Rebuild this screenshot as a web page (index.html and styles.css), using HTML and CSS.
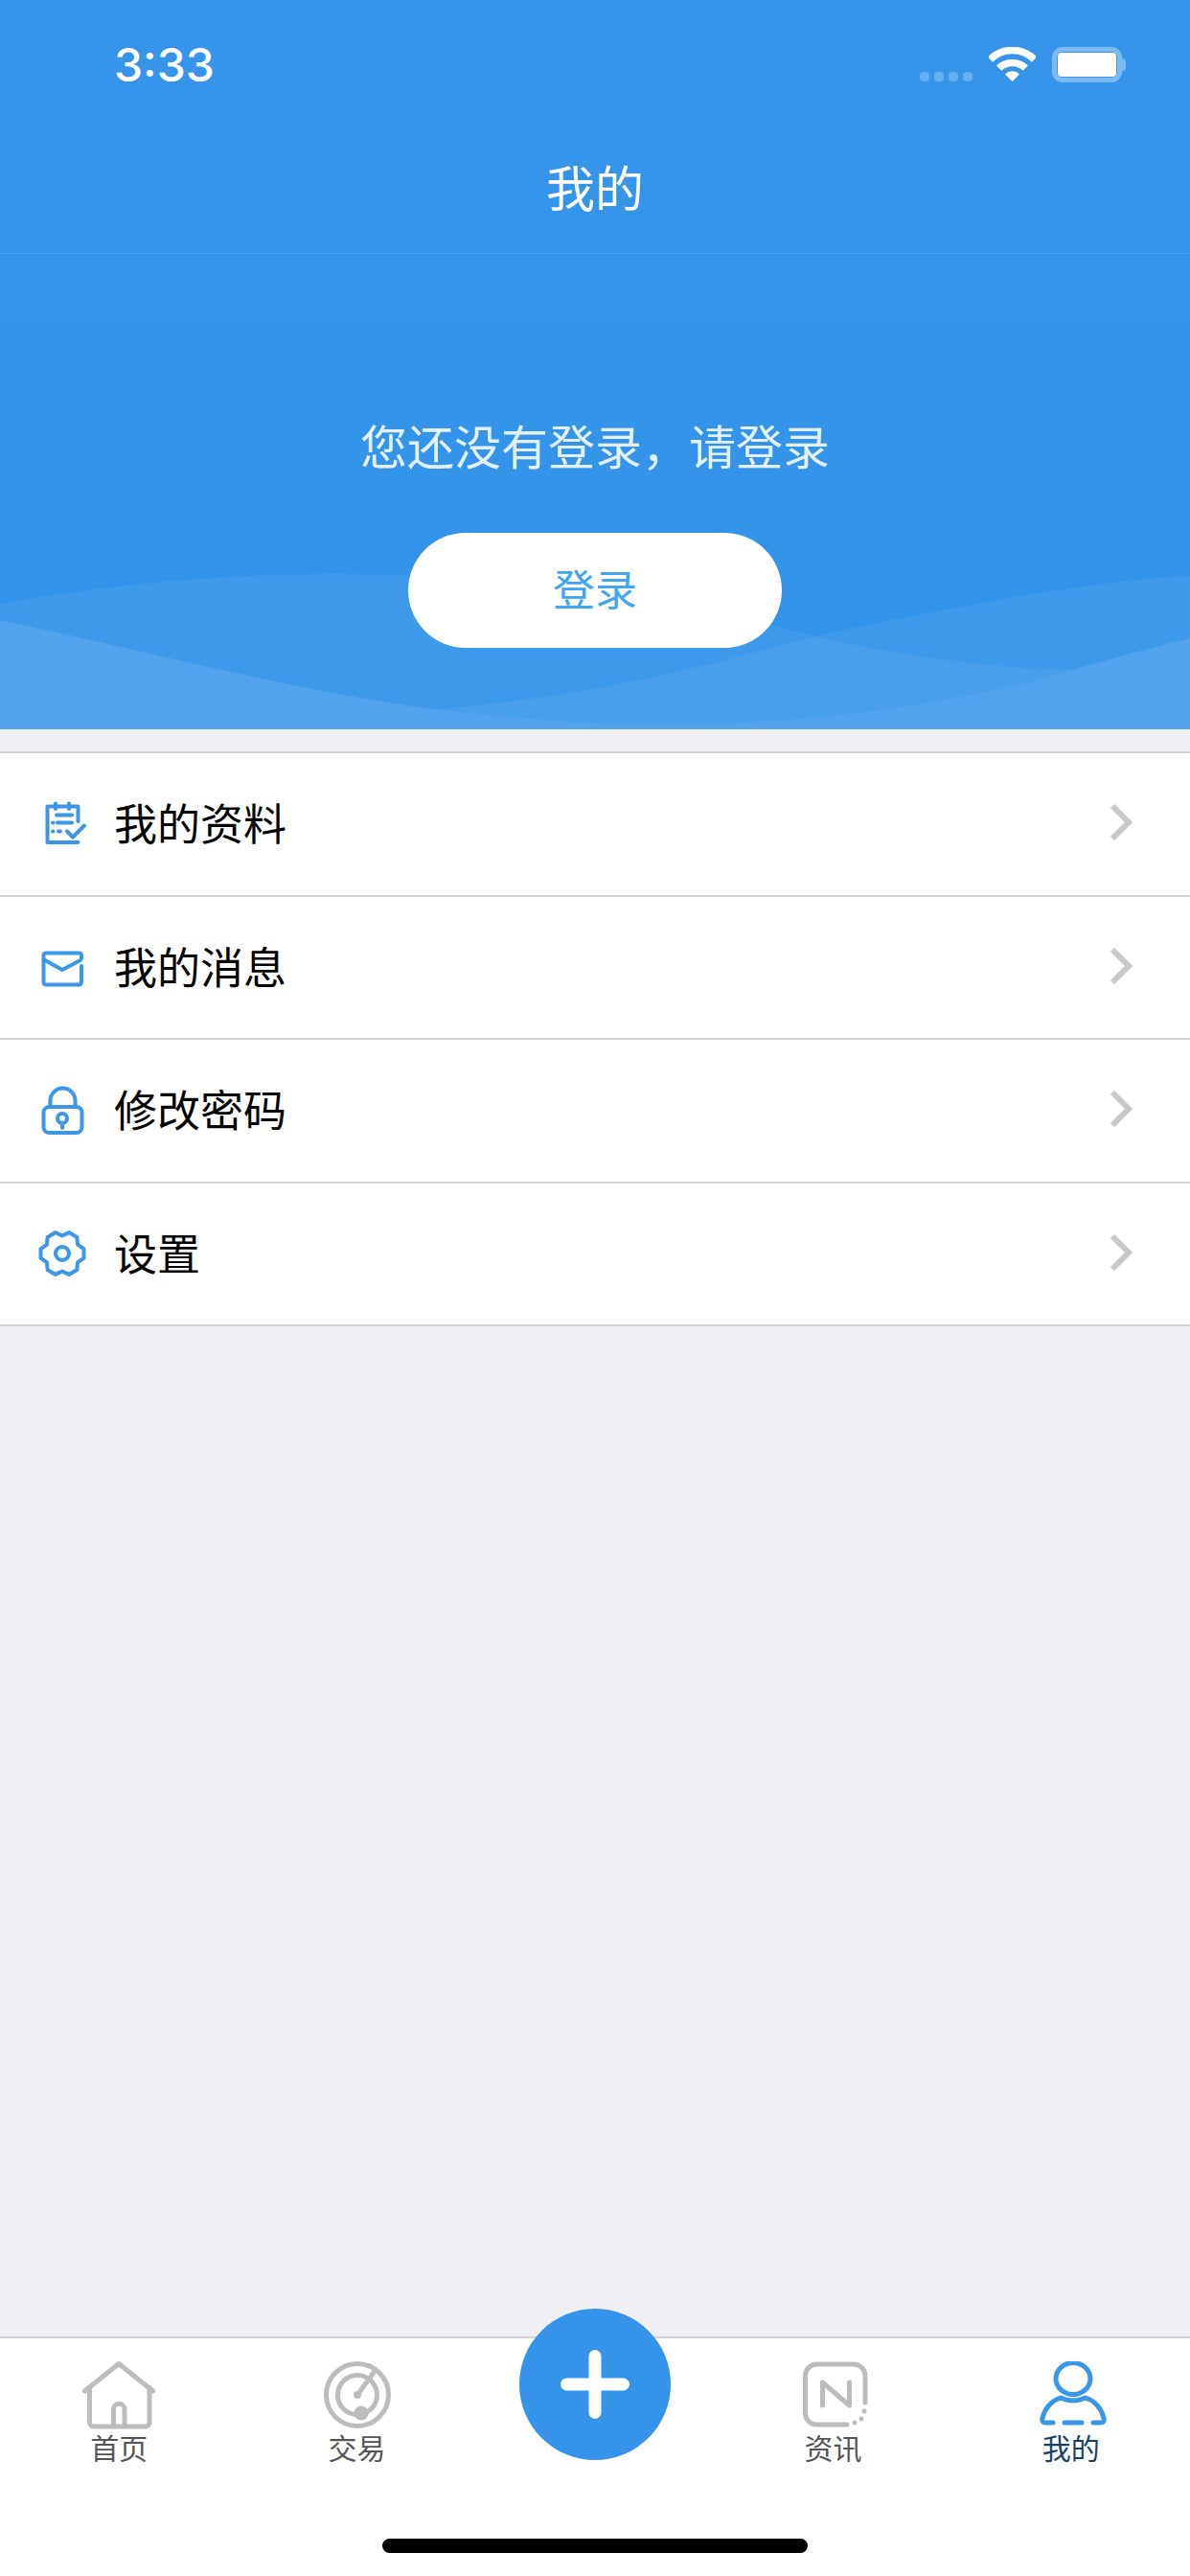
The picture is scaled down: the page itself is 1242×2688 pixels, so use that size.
FILE: index.html
```html
<!DOCTYPE html>
<html lang="zh-CN">
<head>
    <meta charset="UTF-8">
    <meta name="viewport" content="width=device-width, initial-scale=1.0">
    <title>我的</title>
    <link rel="stylesheet" href="styles.css">
</head>
<body>
    <header class="hero">
        <!-- waves behind the login button -->
        <svg class="hero-waves" viewBox="0 591 1242 170" preserveAspectRatio="none">
            <path class="wave-a" d="M0 630C100 612 220 599 350 599C560 600 700 622 850 664C950 686 1040 698 1120 699L1242 761H0Z"/>
            <path class="wave-b" d="M1242 601C1140 606 1010 630 850 664C760 688 640 724 455 740V761H1242Z"/>
            <path class="wave-c" d="M0 647C140 676 300 720 455 740C550 751 630 757 700 756C850 755 1000 735 1120 699C1160 687 1200 676 1242 666V761H0Z"/>
        </svg>

        <div class="status-bar">
            <span class="status-time">3:33</span>
            <div class="status-icons">
                <div class="signal"><i></i><i></i><i></i><i></i></div>
                <svg class="wifi" viewBox="0 0 49 36">
                    <path class="wifi-arc" d="M1.5 13A32.5 32.5 0 0 1 47.5 13"/>
                    <path class="wifi-arc" d="M10.7 22.2A19.5 19.5 0 0 1 38.3 22.2"/>
                    <path class="wifi-dot" d="M24.5 36L17 28.5A10.5 10.5 0 0 1 32 28.5Z"/>
                </svg>
                <div class="battery"><div class="battery-level"></div></div>
            </div>
        </div>

        <div class="nav-bar"><span class="nav-title">我的</span></div>

        <div class="login-box">
            <p class="login-tip">您还没有登录，请登录</p>
            <a class="login-btn">登录</a>
        </div>
    </header>

    <main class="content">
        <ul class="menu">
            <li class="menu-item">
                <svg class="menu-icon" viewBox="0 0 60 60">
                    <path d="M46.5 27V11.5H14.5V49H46.5"/>
                    <path d="M23 8.5V14M37 8.5V14M24 20.5H40M20 28.5H20.5M25 28.5H40M20 37.5H20.5M26 37.5H28"/>
                    <path d="M35 37.5L41 43.5L53 31.5"/>
                </svg>
                <span class="menu-text">我的资料</span>
                <svg class="menu-arrow" viewBox="0 0 24 38"><path d="M3 2L20 19L3 36"/></svg>
            </li>
            <li class="menu-item">
                <svg class="menu-icon" viewBox="0 0 60 60">
                    <path d="M50 29V46a2.5 2.5 0 0 1-2.5 2.5H13A2.5 2.5 0 0 1 10.5 46V18A2.5 2.5 0 0 1 13 15.5H47.5A2.5 2.5 0 0 1 50 18V21"/>
                    <path d="M12 23L30 33L49 23"/>
                </svg>
                <span class="menu-text">我的消息</span>
                <svg class="menu-arrow" viewBox="0 0 24 38"><path d="M3 2L20 19L3 36"/></svg>
            </li>
            <li class="menu-item">
                <svg class="menu-icon" viewBox="0 0 60 60">
                    <path d="M17.5 26V19.5a13 13 0 0 1 26 0V26"/>
                    <rect x="10.5" y="26" width="40" height="27" rx="6"/>
                    <circle cx="30" cy="38" r="5"/>
                    <path d="M30 43V48"/>
                </svg>
                <span class="menu-text">修改密码</span>
                <svg class="menu-arrow" viewBox="0 0 24 38"><path d="M3 2L20 19L3 36"/></svg>
            </li>
            <li class="menu-item">
                <svg class="menu-icon" viewBox="0 0 60 60">
                    <polygon points="52.5,25.2 52.5,34.8 46,39.3 45.4,47.1 37.100,51.900 30,48.500 22.900,51.900 14.600,47.100 14,39.300 7.500,34.800 7.500,25.200 14,20.700 14.600,12.900 22.900,8.100 30,11.500 37.100,8.100 45.400,12.900 46,20.700"/>
                    <circle cx="30" cy="30" r="7"/>
                </svg>
                <span class="menu-text">设置</span>
                <svg class="menu-arrow" viewBox="0 0 24 38"><path d="M3 2L20 19L3 36"/></svg>
            </li>
        </ul>
    </main>

    <nav class="tab-bar">
        <a class="tab-item">
            <svg class="tab-icon" viewBox="0 0 80 72">
                <path d="M4.5 31L40 2.5L75.5 31"/>
                <path d="M9.5 27V64a4 4 0 0 0 4 4H68a4 4 0 0 0 4-4V27"/>
                <path d="M34.5 68V50a5.7 5.7 0 0 1 11.500 0V68"/>
            </svg>
            <span class="tab-label">首页</span>
        </a>
        <a class="tab-item">
            <svg class="tab-icon" viewBox="0 0 80 72">
                <circle cx="40" cy="35" r="32.5"/>
                <circle cx="40" cy="35" r="20.5"/>
                <path d="M40 35L59 9"/>
                <circle class="tab-dot" cx="40" cy="35" r="4"/>
                <circle class="tab-dot" cx="44" cy="54" r="7.5"/>
            </svg>
            <span class="tab-label">交易</span>
        </a>
        <div class="tab-item tab-center">
            <a class="plus-btn">
                <svg viewBox="0 0 72 72"><path d="M36 6.5V65.5M6.5 36H65.5"/></svg>
            </a>
        </div>
        <a class="tab-item">
            <svg class="tab-icon" viewBox="-2 0 80 72">
                <path d="M53 66H21.5a12 12 0 0 1-12-12V15a12 12 0 0 1 12-12H60a12 12 0 0 1 12 12V43"/>
                <path d="M27.5 46V22L55.5 46V22"/>
                <path d="M71 52V52.1M68 60V60.1M61 64V64.1"/>
            </svg>
            <span class="tab-label">资讯</span>
        </a>
        <a class="tab-item tab-active">
            <svg class="tab-icon" viewBox="-2 0 84 72">
                <ellipse cx="42" cy="18" rx="18" ry="16.5"/>
                <path d="M21 64H13C10 64 9 62 10 59C13 48 20 41 29 38Q42 44 55 38C64 41 71 48 74 59C75 62 74 64 71 64H63M33 64H51"/>
            </svg>
            <span class="tab-label">我的</span>
        </a>
        <div class="home-bar"></div>
    </nav>
</body>
</html>
```

FILE: styles.css
```css
* {
    box-sizing: border-box;
}

body {
    font-family: "Noto Sans CJK SC", "Noto Sans", sans-serif;
    margin: 0;
    padding: 0;
    width: 1242px;
    height: 2688px;
    background: #efeff4;
    display: flex;
    flex-direction: column;
    overflow: hidden;
}

/* top blue area */
.hero {
    position: relative;
    height: 761px;
    background: linear-gradient(180deg, #3695eb, #3193e9);
    color: #fff;
    flex-shrink: 0;
    overflow: hidden;
}

.hero::before {
    content: '';
    position: absolute;
    top: 190px;
    left: 0;
    width: 100%;
    height: 1px;
    background: rgba(255, 255, 255, 0.04);
}

.hero-waves {
    position: absolute;
    left: 0;
    bottom: 0;
    width: 100%;
    height: 170px;
    display: block;
}

.wave-a, .wave-b {
    fill: rgba(255, 255, 255, 0.06);
}

.wave-c {
    fill: #50a3ec;
}

.status-bar {
    position: relative;
    height: 130px;
    display: flex;
    justify-content: space-between;
    padding: 36px 71px 0 119px;
}

.status-time {
    font-family: "Inter", sans-serif;
    font-size: 48px;
    font-weight: 500;
    line-height: 64px;
}

.status-icons {
    display: flex;
    align-items: flex-start;
    padding-top: 13px;
}

.signal {
    display: flex;
    gap: 5px;
    margin-top: 26px;
    margin-right: 17px;
}

.signal i {
    display: block;
    width: 10px;
    height: 10px;
    border-radius: 4px;
    background: rgba(255, 255, 255, 0.25);
}

.wifi {
    width: 49px;
    height: 36px;
    margin-right: 17px;
}

.wifi-arc {
    fill: none;
    stroke: #fff;
    stroke-width: 7.5;
}

.wifi-dot {
    fill: #fff;
}

.battery {
    position: relative;
    width: 73px;
    height: 37px;
    padding: 1px;
    border: 5px solid rgba(255, 255, 255, 0.35);
    border-radius: 11px;
}

.battery::after {
    content: '';
    position: absolute;
    left: 68px;
    top: 7px;
    width: 4px;
    height: 13px;
    border-radius: 0 7px 7px 0;
    background: rgba(255, 255, 255, 0.35);
}

.battery-level {
    height: 100%;
    background: #fff;
    border-radius: 4px;
}

.nav-bar {
    position: relative;
    height: 135px;
    line-height: 128px;
    font-size: 51px;
    text-align: center;
    border-bottom: 1px solid rgba(255, 255, 255, 0.08);
}

.login-box {
    position: relative;
    display: flex;
    flex-direction: column;
    align-items: center;
    padding-top: 163px;
}

.login-tip {
    margin: 0;
    font-size: 49px;
    line-height: 72px;
    color: rgba(255, 255, 255, 0.86);
}

.login-btn {
    width: 390px;
    height: 120px;
    margin-top: 56px;
    line-height: 114px;
    border-radius: 60px;
    background: #fff;
    color: #3ea7f0;
    font-size: 44px;
    text-align: center;
}

/* menu list */
.content {
    flex: 1;
}

.menu {
    list-style: none;
    margin: 23px 0 0;
    padding: 0;
    background: #fff;
    border-top: 2px solid #d2d2d6;
}

.menu-item {
    height: 149.5px;
    display: flex;
    align-items: center;
    padding: 0 60px 0 35px;
    border-bottom: 2px solid #d2d2d6;
}

.menu-icon {
    width: 60px;
    height: 60px;
    margin-right: 24px;
    fill: none;
    stroke: #3c97e9;
    stroke-width: 4;
    stroke-linecap: round;
    stroke-linejoin: round;
}

.menu-text {
    flex: 1;
    font-size: 45px;
    line-height: 60px;
    padding-bottom: 3px;
    color: #000;
}

.menu-arrow {
    width: 24px;
    height: 38px;
    margin-bottom: 3px;
    fill: none;
    stroke: #c7c7cc;
    stroke-width: 6;
}

/* bottom tabs */
.tab-bar {
    position: relative;
    height: 250px;
    flex-shrink: 0;
    display: grid;
    grid-template-columns: repeat(5, 1fr);
    background: #fff;
    border-top: 2px solid #d0d0d6;
}

.tab-item {
    display: flex;
    flex-direction: column;
    align-items: center;
    padding-top: 24px;
    color: #555;
}

.tab-icon {
    width: 80px;
    height: 72px;
    fill: none;
    stroke: #bcbcbc;
    stroke-width: 5;
    stroke-linecap: round;
    stroke-linejoin: round;
}

.tab-dot {
    fill: #bcbcbc;
    stroke: none;
}

.tab-label {
    margin-top: -1px;
    font-size: 30px;
    line-height: 36px;
}

.tab-active {
    color: #1d3f66;
}

.tab-active .tab-icon {
    width: 84px;
    stroke: #3a96e9;
}

.tab-center {
    position: relative;
}

.plus-btn {
    position: absolute;
    top: -31px;
    left: 45px;
    width: 158px;
    height: 158px;
    border-radius: 50%;
    background: #3594ea;
    display: flex;
    align-items: center;
    justify-content: center;
}

.plus-btn svg {
    width: 72px;
    height: 72px;
    fill: none;
    stroke: #fff;
    stroke-width: 13;
    stroke-linecap: round;
}

.home-bar {
    position: absolute;
    left: 399px;
    bottom: 24px;
    width: 444px;
    height: 15px;
    border-radius: 8px;
    background: #000;
}
```
